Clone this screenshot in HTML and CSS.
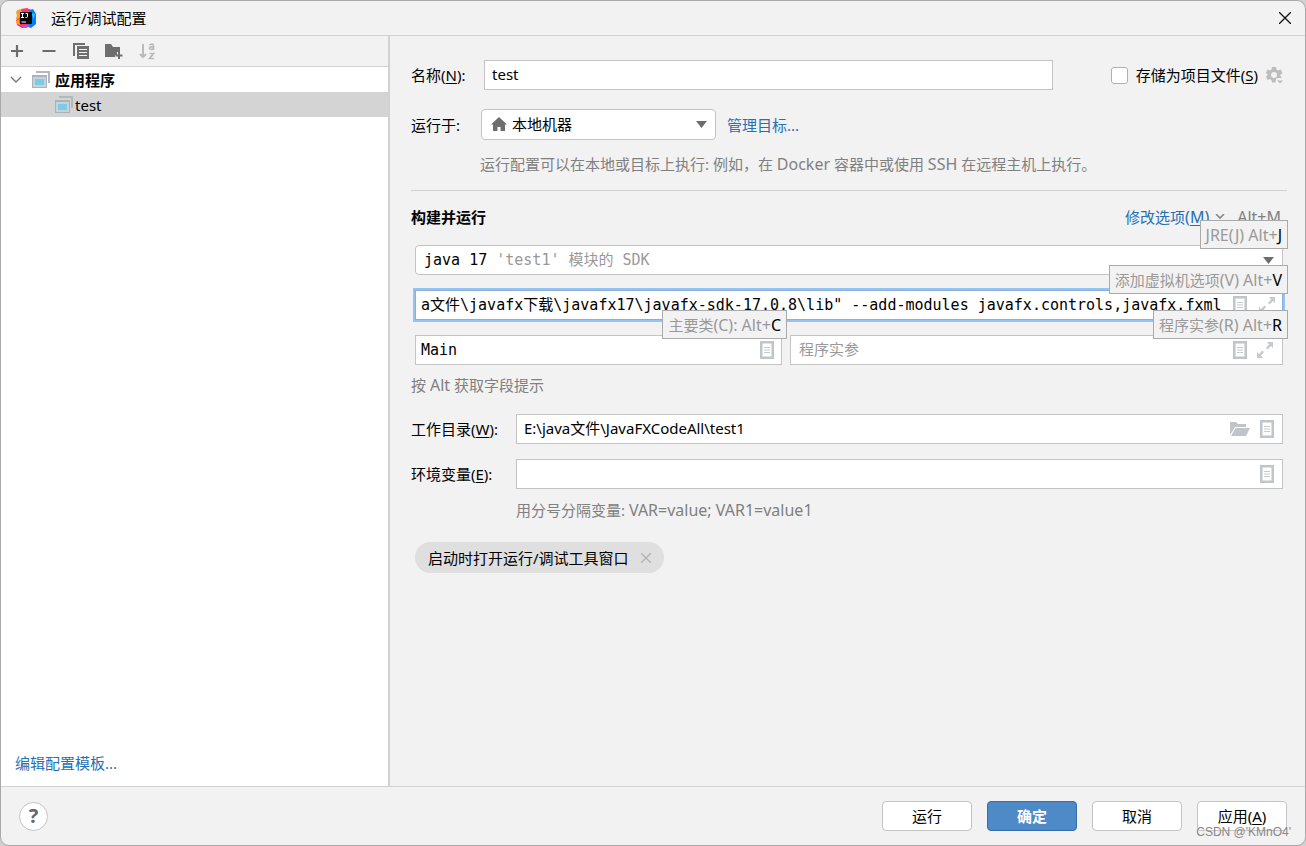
FILE: index.html
```html
<!DOCTYPE html>
<html lang="zh-CN">
<head>
<meta charset="utf-8">
<title>运行/调试配置</title>
<link rel="stylesheet" href="styles.css">
</head>
<body>
<svg class="defs" aria-hidden="true">
  <symbol id="doc" viewBox="0 0 14 18"><path d="M0 0h14v18H0zM2.500 2.500v13h9v-13z" fill="#bfc5c9" fill-rule="evenodd"/><path d="M4 6.500h6M4 9h6M4 11.500h6" stroke="#c4cacd"/></symbol>
  <symbol id="expand" viewBox="0 0 16 16"><path d="M10 0h6v6l-2-2-3.500 3.500-1.500-1.500L12 2.500zM6 16H0v-6l2 2 3.500-3.500L7 10l-3 3.500z" fill="#c4cacd"/></symbol>
  <symbol id="app" viewBox="0 0 18 17"><path d="M4 0h14v12h-2V2H4z" fill="#b0b9be"/><path d="M0 4h15v13H0z" fill="#a9b3b9"/><path d="M1 6h13v10H1z" fill="#c3d4dc"/><path d="M3 8h9v6H3z" fill="#7ecbe6"/></symbol>
</svg>
<div class="dialog">
  <header class="titlebar">
    <svg class="logo" width="20" height="20" viewBox="0 0 20 20"><path d="M1 2l5-1 2 6-4 6-4-2 1-4-1-2z" fill="#ff9b22"/><path d="M5 1l6-1 4 2-8 5z" fill="#ff3576"/><path d="M13 2l4-1 3 5v10l-5 4-5-2z" fill="#087cf2"/><path d="M15 5l4 1-1 5z" fill="#21c8f4"/><path d="M0 12l5-3 8 10-7 1-5-3z" fill="#fb315d"/><path d="M0 13l3-2 1 6-3-1z" fill="#ff9b22"/><path d="M6 17h8l-4 3-4-1z" fill="#b74af7"/><path d="M4 4h12v12H4z" fill="#080305"/><path d="M5 5.500h3M6.500 6v3M5 9.500h3M9.500 5.500h2v3q0 1-1 1h-1" fill="none" stroke="#fff"/><path d="M5.500 14h4.500" stroke="#fff"/></svg>
    <h1 class="title">运行/调试配置</h1>
    <button class="icon-button" aria-label="关闭"><svg width="12" height="12" viewBox="0 0 12 12"><path d="M0 0l12 12M12 0L0 12" stroke="#111" stroke-width="1.300"/></svg></button>
  </header>
  <div class="main">
    <aside class="sidebar">
      <div class="toolbar">
        <button class="icon-button" aria-label="添加"><svg width="16" height="16" viewBox="0 0 16 16"><path d="M8 2v12M2 8h12" stroke="#6c6c6c" stroke-width="2.200"/></svg></button>
        <button class="icon-button" aria-label="移除"><svg width="16" height="16" viewBox="0 0 16 16"><path d="M1.500 8h13" stroke="#6c6c6c" stroke-width="2"/></svg></button>
        <button class="icon-button" aria-label="复制"><svg width="16" height="16" viewBox="0 0 16 16"><path d="M0 0h12v2H2v11H0z" fill="#6e6e6e"/><path d="M4 3h12v13H4z" fill="#6e6e6e"/><path d="M6 6.500h8M6 9.500h8M6 12.500h8" stroke="#f2f2f2"/></svg></button>
        <button class="icon-button" aria-label="新建文件夹"><svg width="18" height="16" viewBox="0 0 18 16"><path d="M0 1h6l2 3h7v5h-3v3h-2v2H0z" fill="#6e6e6e"/><path d="M14 9v7M10.500 12.500h7" stroke="#6e6e6e" stroke-width="2"/></svg></button>
        <button class="icon-button" aria-label="排序" disabled><svg width="17" height="17" viewBox="0 0 17 17"><path d="M4 1v13M1 11l3 3 3-3" fill="none" stroke="#bbb" stroke-width="2"/><path d="M10.500 2q4-2 4 1v4M14.500 4q-4-.5-4 1.500 1.500 2 4 0M10.500 10.500h4l-4 5h4.500" fill="none" stroke="#bbb" stroke-width="1.700"/></svg></button>
      </div>
      <ul class="tree">
        <li class="node"><svg class="chevron" width="12" height="8" viewBox="0 0 12 8"><path d="M1 1l5 5 5-5" fill="none" stroke="#777" stroke-width="1.400"/></svg><svg width="18" height="17"><use href="#app"/></svg><b>应用程序</b></li>
        <li class="node child"><svg width="18" height="17"><use href="#app"/></svg><span>test</span></li>
      </ul>
      <a class="link templates" href="#">编辑配置模板...</a>
    </aside>
    <main class="form">
      <div class="row">
        <label class="label" for="name">名称(<u>N</u>):</label>
        <div class="field name"><input id="name" type="text" value="test"></div>
        <label class="store"><input class="check" type="checkbox">存储为项目文件(<u>S</u>)</label>
        <button class="icon-button gear" aria-label="存储设置"><svg width="17" height="18" viewBox="0 0 17 18"><path d="M6 1h4l.5 2.500 1.500 1 2.500-1 2 3.500-2 1.500v2l1.500 1.500H11l-1 1-.5 3.500H6l-.5-2.500-1.500-1-2.500 1L0 10.500 2 9 0 7l1.500-3.500 2.500 1 1.500-1zM8 6a3 3 0 100 6 3 3 0 000-6z" fill="#bcbcbc" fill-rule="evenodd"/><path d="M11 14.500h6l-3 3z" fill="#bcbcbc"/></svg></button>
      </div>
      <div class="row target">
        <label class="label" for="target">运行于:</label>
        <div class="combo target-combo">
          <svg class="home" width="16" height="15" viewBox="0 0 16 15"><path d="M8 0l8 7.500h-2V14H9.500v-4h-3v4H2V7.500H0z" fill="#6e6e6e"/></svg>
          <select id="target"><option>本地机器</option></select>
          <svg class="arrow" width="11" height="7" viewBox="0 0 11 7"><path d="M0 0h11L5.500 7z" fill="#6e6e6e"/></svg>
        </div>
        <a class="link" href="#">管理目标...</a>
      </div>
      <p class="hint target-hint">运行配置可以在本地或目标上执行: 例如，在 <span class="latin">Docker</span> 容器中或使用 <span class="latin">SSH</span> 在远程主机上执行。</p>
      <div class="section-head">
        <h2>构建并运行</h2>
        <a class="link" href="#">修改选项<span class="latin">(<u>M</u>)</span></a>
        <svg width="10" height="6" viewBox="0 0 10 6"><path d="M1 0l4 4 4-4" fill="none" stroke="#888" stroke-width="1.600"/></svg>
        <span class="shortcut">Alt+M</span>
      </div>
      <div class="build">
        <div class="anchor">
          <button class="combo jdk" aria-haspopup="listbox"><span>java 17 <span class="muted">'test1' 模块的 SDK</span></span><svg class="arrow" width="11" height="7" viewBox="0 0 11 7"><path d="M0 0h11L5.500 7z" fill="#6e6e6e"/></svg></button>
          <span class="tip"><span class="latin">JRE(J) Alt+<b>J</b></span></span>
        </div>
        <div class="anchor">
          <div class="field mono focused"><input type="text" aria-label="虚拟机选项" value="a文件\javafx下载\javafx17\javafx-sdk-17.0.8\lib&quot; --add-modules javafx.controls,javafx.fxml"><svg width="14" height="18"><use href="#doc"/></svg><svg width="16" height="16"><use href="#expand"/></svg></div>
          <span class="tip">添加虚拟机选项<span class="latin">(V) Alt+<b>V</b></span></span>
        </div>
        <div class="pair">
          <div class="anchor">
            <div class="field mono"><input type="text" aria-label="主要类" value="Main"><svg width="14" height="18"><use href="#doc"/></svg></div>
            <span class="tip">主要类<span class="latin">(C): Alt+<b>C</b></span></span>
          </div>
          <div class="anchor">
            <div class="field mono args"><input type="text" aria-label="程序实参" placeholder="程序实参"><svg width="14" height="18"><use href="#doc"/></svg><svg width="16" height="16"><use href="#expand"/></svg></div>
            <span class="tip">程序实参<span class="latin">(R) Alt+<b>R</b></span></span>
          </div>
        </div>
      </div>
      <p class="hint alt-hint">按 <span class="latin">Alt</span> 获取字段提示</p>
      <div class="row wide">
        <label class="label" for="dir">工作目录(<u>W</u>):</label>
        <div class="field"><input id="dir" type="text" value="E:\java文件\JavaFXCodeAll\test1"><svg width="20" height="16" viewBox="0 0 20 16"><path d="M0 14V1h6l2 2h8v3H5z" fill="#bfc5c9"/><path d="M5.500 7H20l-4 8H1z" fill="#bfc5c9"/></svg><svg width="14" height="18"><use href="#doc"/></svg></div>
      </div>
      <div class="row wide">
        <label class="label" for="env">环境变量(<u>E</u>):</label>
        <div class="field"><input id="env" type="text"><svg width="14" height="18"><use href="#doc"/></svg></div>
      </div>
      <p class="hint env-hint">用分号分隔变量: <span class="latin">VAR=value; VAR1=value1</span></p>
      <div class="pill">启动时打开运行/调试工具窗口<button class="icon-button" aria-label="移除选项"><svg width="10" height="10" viewBox="0 0 10 10"><path d="M0 0l10 10M10 0L0 10" stroke="#adb3b7" stroke-width="1.300"/></svg></button></div>
    </main>
  </div>
  <footer class="footer">
    <button class="help" aria-label="帮助">?</button>
    <button class="button">运行</button>
    <button class="button primary">确定</button>
    <button class="button">取消</button>
    <button class="button">应用(<u>A</u>)</button>
  </footer>
  <span class="watermark">CSDN @'KMnO4'</span>
</div>
</body>
</html>
```
FILE: styles.css
```css
* { box-sizing: border-box; }
body {
  margin: 0;
  background: #d0d0d0;
  color: #000;
  font: 15px/20px "Noto Sans", "Noto Sans CJK SC", sans-serif;
}
button, input, select { font: inherit; color: inherit; }
h1, h2, p, ul { margin: 0; padding: 0; }
svg { flex: none; display: block; }
u { text-underline-offset: 2px; }
.defs { position: absolute; width: 0; height: 0; }
.dialog {
  position: relative;
  display: flex;
  flex-direction: column;
  min-height: 100vh;
  border: 1px solid #aaa;
  border-radius: 9px;
  background: #f2f2f2;
  overflow: hidden;
}
.titlebar {
  display: flex;
  align-items: center;
  height: 35px;
  padding: 0 14px 0 15px;
  border-bottom: 1px solid #d1d1d1;
}
.title {
  flex: 1;
  margin-left: 15px;
  font-size: 15px;
  font-weight: 400;
}
.icon-button {
  display: flex;
  padding: 0;
  border: 0;
  background: none;
}
.main { display: flex; flex: 1; }
.sidebar {
  display: flex;
  flex-direction: column;
  width: 389px;
  border-right: 2px solid #d1d1d1;
  background: #fff;
}
.toolbar {
  display: flex;
  align-items: center;
  gap: 16px;
  height: 31px;
  padding-left: 8px;
  border-bottom: 1px solid #d1d1d1;
  background: #f2f2f2;
}
.tree { flex: 1; list-style: none; }
.node {
  display: flex;
  align-items: center;
  gap: 5px;
  height: 25px;
  padding-left: 9px;
}
.chevron { margin-right: 5px; }
.child { padding-left: 54px; gap: 2px; background: #d4d4d4; }
.link { color: #2470b3; text-decoration: none; }
.templates { padding: 0 14px 13px; }
.form { flex: 1; min-width: 0; padding: 24px 18px 0 21px; }
.row { display: flex; align-items: center; }
.label { width: 70px; }
.field {
  display: flex;
  flex: 1;
  align-items: center;
  gap: 10px;
  min-width: 0;
  height: 30px;
  padding: 0 8px 0 7px;
  border: 1px solid #c4c4c4;
  background: #fff;
}
.field input {
  flex: 1;
  width: 0;
  min-width: 0;
  padding: 0 0 2px;
  border: 0;
  outline: 0;
  background: none;
}
.field input::placeholder { color: #999; opacity: 1; }
.name { margin-left: 3px; }
.store { display: flex; align-items: center; margin-left: 58px; }
.check {
  appearance: none;
  width: 17px;
  height: 17px;
  margin: 0 8px 0 0;
  border: 1px solid #b0b0b0;
  border-radius: 3px;
  background: #fff;
}
.gear { margin: 0 4px 0 8px; }
.target { margin-top: 19px; }
.combo {
  display: flex;
  align-items: center;
  height: 30px;
  border: 1px solid #c4c4c4;
  border-radius: 4px;
  background: #fff;
}
.target-combo { position: relative; width: 235px; height: 31px; margin-right: 11px; }
.target-combo select {
  width: 100%;
  height: 100%;
  padding: 0 30px 2px;
  border: 0;
  outline: 0;
  background: none;
  appearance: none;
}
.home, .target-combo .arrow { position: absolute; pointer-events: none; }
.home { left: 9px; }
.target-combo .arrow { right: 8px; }
.hint { color: #808080; }
.latin { font-size: 16px; line-height: 16px; }
.target-hint { padding: 14px 0 16px 69px; border-bottom: 1px solid #d1d1d1; }
.section-head {
  display: flex;
  align-items: center;
  gap: 6px;
  padding: 16px 6px 18px 0;
}
.section-head h2 { flex: 1; font-size: 15px; font-weight: 700; }
.shortcut { margin-left: 6px; color: #808080; font-size: 16px; }
.build {
  display: flex;
  flex-direction: column;
  gap: 15px;
  padding: 0 4px;
  font-family: "DejaVu Sans Mono", "Noto Sans CJK SC", monospace;
}
.anchor { position: relative; min-width: 0; }
.jdk {
  justify-content: space-between;
  width: 100%;
  padding: 0 8px;
  text-align: left;
}
.muted { color: #999; }
.mono { padding: 0 7px 0 5px; gap: 12px; }
.mono input { padding: 0; }
.focused { border-color: #87afda; box-shadow: 0 0 0 2px #97c3f3; }
.args { padding: 0 9px 0 8px; gap: 10px; }
.pair { display: grid; grid-template-columns: 367fr 493fr; gap: 8px; }
.tip {
  position: absolute;
  z-index: 1;
  right: -5px;
  bottom: calc(100% - 4px);
  height: 29px;
  padding: 4px 5px;
  border: 1px solid #aaa;
  background: #f2f2f2;
  color: #999;
  font-family: "Noto Sans", "Noto Sans CJK SC", sans-serif;
  white-space: nowrap;
}
.tip b { color: #000; font-weight: 400; }
.alt-hint { padding: 10px 0 19px; }
.wide { padding-right: 4px; margin-bottom: 15px; }
.wide .label { width: 105px; }
.env-hint { padding-left: 105px; margin-top: -4px; }
.pill {
  display: inline-flex;
  align-items: center;
  gap: 12px;
  height: 31px;
  margin: 22px 4px 0;
  padding: 0 13px;
  border-radius: 16px;
  background: #dfdfdf;
}
.footer {
  display: flex;
  align-items: center;
  gap: 15px;
  height: 59px;
  padding: 0 18px;
  border-top: 1px solid #d1d1d1;
}
.help {
  width: 29px;
  height: 29px;
  margin-right: auto;
  padding: 0;
  border: 1px solid #c4c4c4;
  border-radius: 50%;
  background: #fff;
  color: #666;
  font-size: 20px;
  font-weight: 700;
}
.button {
  width: 90px;
  height: 30px;
  padding: 0;
  border: 1px solid #c4c4c4;
  border-radius: 4px;
  background: #fff;
}
.primary { border-color: #346dad; background: #4e89c8; color: #fff; font-weight: 700; }
.watermark {
  position: absolute;
  right: 14px;
  bottom: 3px;
  color: #888;
  font: 12px/20px "Liberation Sans", sans-serif;
}
```
